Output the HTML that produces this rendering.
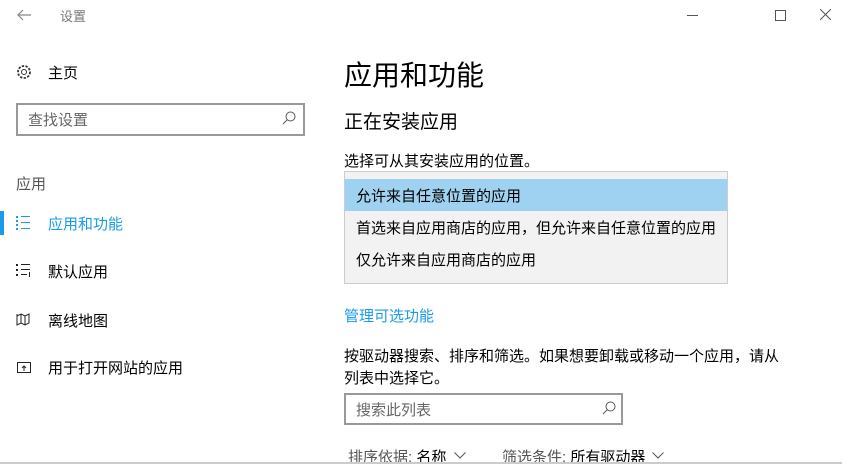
<!DOCTYPE html>
<html><head><meta charset="utf-8"><style>
body{margin:0;width:842px;height:464px;background:#fff;overflow:hidden;position:relative;font-family:"Liberation Sans","Noto Sans CJK SC",sans-serif;color:#000}
.a{position:absolute;white-space:nowrap}
.ic{position:absolute}
</style></head><body>
<svg class="ic" style="left:16px;top:8px" width="16" height="14"><path d="M15 7H2 M7 2L2 7l5 5" fill="none" stroke="#888" stroke-width="1.2"/></svg>
<div class="a" style="left:60px;top:6px;font-size:13px;color:#777">设置</div>
<div class="ic" style="left:687px;top:15px;width:11px;height:1px;background:#555"></div>
<div class="ic" style="left:775px;top:10px;width:9px;height:9px;border:1px solid #555"></div>
<svg class="ic" style="left:820px;top:9px" width="11" height="11"><path d="M0 0L11 11M11 0L0 11" stroke="#555"/></svg>

<svg class="ic" style="left:16px;top:64px" width="16" height="16" viewBox="0 0 16 16"><circle cx="8" cy="8" r="2.5" fill="none" stroke="#333"/><circle cx="8" cy="8" r="6" fill="none" stroke="#333" stroke-dasharray="2.3 1.4" stroke-width="1.8"/></svg>
<div class="a" style="left:48px;top:62px;font-size:15px">主页</div>
<div class="ic" style="left:16px;top:103px;width:285px;height:29px;border:2px solid #999"></div>
<div class="a" style="left:28px;top:109px;font-size:15px;color:#666">查找设置</div>
<svg class="ic" style="left:282px;top:111px" width="14" height="14"><circle cx="8.5" cy="5.5" r="4.5" fill="none" stroke="#555"/><path d="M5.3 8.7L1 13" stroke="#555"/></svg>
<div class="a" style="left:16px;top:173px;font-size:15px;color:#555">应用</div>
<div class="ic" style="left:0;top:211px;width:4px;height:24px;background:#1a9be8"></div>
<svg class="ic" style="left:16px;top:215px" width="16" height="16"><g fill="#1a9be8"><rect x="0" y="1" width="2" height="2"/><rect x="0" y="5" width="2" height="2"/><rect x="0" y="9" width="2" height="2"/><rect x="0" y="13" width="2" height="2"/><rect x="5" y="1" width="9" height="1"/><rect x="5" y="7" width="9" height="1"/><rect x="5" y="13" width="9" height="1"/></g></svg>
<div class="a" style="left:48px;top:213px;font-size:15px;color:#1a9be8">应用和功能</div>
<svg class="ic" style="left:16px;top:263px" width="16" height="16"><g fill="#222"><rect x="0" y="1" width="2" height="2"/><rect x="0" y="6" width="2" height="2"/><rect x="0" y="11" width="2" height="2"/><rect x="5" y="1" width="9" height="1"/><rect x="5" y="6" width="9" height="1"/><rect x="5" y="11" width="6" height="1"/><rect x="13" y="9" width="1" height="5"/></g></svg>
<div class="a" style="left:48px;top:261px;font-size:15px">默认应用</div>
<svg class="ic" style="left:16px;top:312px" width="16" height="16"><path d="M1 2v11l4-2 4 2 4-2V2L9 4 5 2 1 4z M5 2v9 M9 4v9" fill="none" stroke="#222"/></svg>
<div class="a" style="left:48px;top:310px;font-size:15px">离线地图</div>
<svg class="ic" style="left:16px;top:360px" width="16" height="16"><path d="M1.5 2.5h13v10h-13z M8 11V6 M6 8l2-2 2 2" fill="none" stroke="#222"/></svg>
<div class="a" style="left:48px;top:357px;font-size:15px">用于打开网站的应用</div>

<div class="a" style="left:344px;top:54px;font-size:28px">应用和功能</div>
<div class="a" style="left:344px;top:107px;font-size:19px">正在安装应用</div>
<div class="a" style="left:344px;top:150px;font-size:15px">选择可从其安装应用的位置。</div>
<div class="ic" style="left:344px;top:171px;width:382px;height:111px;background:#f2f2f2;border:1px solid #ccc"></div>
<div class="ic" style="left:345px;top:179px;width:382px;height:32px;background:#9fd2f0"></div>
<div class="a" style="left:356px;top:185px;font-size:15px">允许来自任意位置的应用</div>
<div class="a" style="left:356px;top:217px;font-size:15px">首选来自应用商店的应用，但允许来自任意位置的应用</div>
<div class="a" style="left:356px;top:249px;font-size:15px">仅允许来自应用商店的应用</div>
<div class="a" style="left:344px;top:305px;font-size:15px;color:#1a9be8">管理可选功能</div>
<div class="a" style="left:344px;top:345px;font-size:15px">按驱动器搜索、排序和筛选。如果想要卸载或移动一个应用，请从</div>
<div class="a" style="left:344px;top:367px;font-size:15px">列表中选择它。</div>
<div class="ic" style="left:344px;top:393px;width:275px;height:28px;border:2px solid #999"></div>
<div class="a" style="left:356px;top:399px;font-size:15px;color:#666">搜索此列表</div>
<svg class="ic" style="left:602px;top:401px" width="14" height="14"><circle cx="8.5" cy="5.5" r="4.5" fill="none" stroke="#555"/><path d="M5.3 8.7L1 13" stroke="#555"/></svg>
<div class="a" style="left:348px;top:446px;font-size:15px;color:#555">排序依据: <span style="color:#000">名称</span></div>
<svg class="ic" style="left:454px;top:452px" width="12" height="7"><path d="M0.5 0.5L6 6l5.5-5.5" fill="none" stroke="#555"/></svg>
<div class="a" style="left:502px;top:446px;font-size:15px;color:#555">筛选条件: <span style="color:#000">所有驱动器</span></div>
<svg class="ic" style="left:652px;top:452px" width="12" height="7"><path d="M0.5 0.5L6 6l5.5-5.5" fill="none" stroke="#555"/></svg>
<div class="ic" style="left:0;top:462px;width:842px;height:2px;background:#ccc"></div>
</body></html>
